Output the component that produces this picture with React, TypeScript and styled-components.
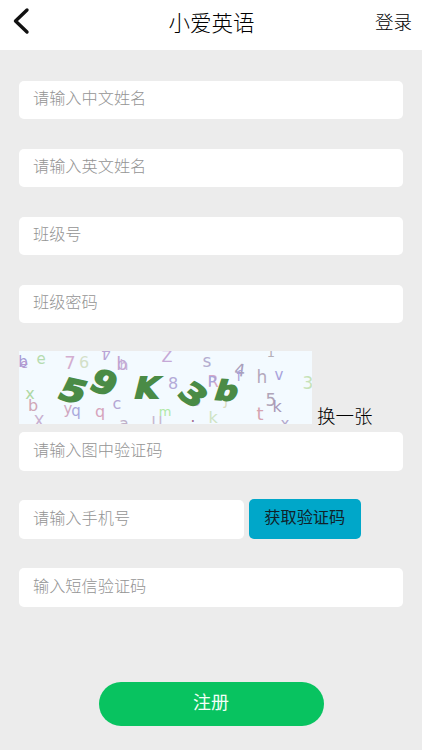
import React from 'react';
import styled, { createGlobalStyle } from 'styled-components';

const GlobalStyle = createGlobalStyle`
  html, body {
    margin: 0;
    padding: 0;
    background: #ececec;
  }
  * {
    box-sizing: border-box;
  }
`;

const Page = styled.div`
  width: 422px;
  height: 750px;
  overflow: hidden;
  display: flex;
  flex-direction: column;
  background: #ececec;
  font-family: "Noto Sans CJK SC", "Noto Sans", sans-serif;
  font-weight: 300;
`;

const Header = styled.header`
  height: 50px;
  flex: none;
  display: grid;
  grid-template-columns: 1fr auto 1fr;
  align-items: center;
  padding: 0 10px 0 11px;
  background: #fff;
`;

const BackButton = styled.button`
  width: 20px;
  height: 36px;
  padding: 0;
  margin-top: -9px;
  border: none;
  background: none;
  display: flex;
  align-items: center;
  justify-content: center;
`;

const Title = styled.h1`
  margin: -7px 0 0;
  font-size: 21.5px;
  font-weight: 300;
  color: #000;
`;

const LoginLink = styled.a`
  justify-self: end;
  margin-top: -9px;
  font-size: 18.5px;
  color: #000;
`;

const Form = styled.form`
  flex: 1;
  display: flex;
  flex-direction: column;
  padding: 30.5px 19px 24px;
`;

const Field = styled.input<{ $compact?: boolean }>`
  width: ${p => (p.$compact ? '225px' : '100%')};
  height: 38.5px;
  flex: none;
  padding: 0 15px 5px 14px;
  border: none;
  border-radius: 5px;
  outline: none;
  background: #fff;
  font-family: inherit;
  font-weight: 300;
  font-size: 16.2px;
  color: #333;

  &::placeholder {
    color: #949494;
    opacity: 1;
  }
`;

const Stack = styled.div`
  display: flex;
  flex-direction: column;
  gap: 29.5px;
`;

const CaptchaRow = styled.div`
  display: flex;
  align-items: flex-end;
  gap: 5px;
  margin: 28px 0 8px;
`;

const CaptchaImage = styled.svg`
  width: 293px;
  height: 73px;
  display: block;
  background: #f3faff;
`;

const CaptchaGlyph = styled.text<{ $strong?: boolean }>`
  font-family: "DejaVu Sans", sans-serif;
  font-weight: ${p => (p.$strong ? 700 : 400)};
  text-anchor: middle;
  dominant-baseline: central;
`;

const RefreshLink = styled.a`
  font-size: 18.5px;
  line-height: 20px;
  margin-bottom: -1px;
  color: #000;
`;

const PhoneRow = styled.div`
  display: flex;
  align-items: flex-end;
  gap: 4.5px;
  margin: 28px 0 29.5px;
`;

const CodeButton = styled.button`
  width: 112.5px;
  height: 40px;
  padding: 0 0 5px;
  border: none;
  border-radius: 5px;
  background: #00a7c9;
  font-family: inherit;
  font-size: 16.2px;
  color: #10222a;
`;

const Submit = styled.button`
  width: 225px;
  height: 44.5px;
  margin: 75px 0 0 79.5px;
  padding: 0 0 5px;
  border: none;
  border-radius: 22.5px;
  background: #08c360;
  font-family: inherit;
  font-size: 18px;
  color: #f2fff7;
`;

type Glyph = { c: string; x: number; y: number; s: number; f: string; r?: number; k?: number; w?: number; strong?: boolean };

const captchaGlyphs: Glyph[] = [
  { c: 'b', x: 4, y: 11, s: 15, f: '#a79ad6' },
  { c: 'e', x: 5, y: 12, s: 13, f: '#b59ad0' },
  { c: 'e', x: 22, y: 8, s: 15, f: '#b5dcb0' },
  { c: '7', x: 51, y: 11, s: 18, f: '#d3aed0' },
  { c: '6', x: 65, y: 11, s: 16, f: '#d3e0c8' },
  { c: '4', x: 87, y: 2, s: 15, f: '#b9a4d6', r: 180 },
  { c: 'b', x: 103, y: 12, s: 18, f: '#c0a4d0' },
  { c: 'h', x: 105, y: 14, s: 14, f: '#c8b0d8' },
  { c: 'Z', x: 148, y: 5, s: 16, f: '#c5a8d6' },
  { c: 's', x: 188, y: 10, s: 17, f: '#b4aed0' },
  { c: '1', x: 252, y: 1, s: 13, f: '#b5b0b8' },
  { c: '4', x: 221, y: 19, s: 17, f: '#a9a0bc', r: 8 },
  { c: 'f', x: 220, y: 25, s: 14, f: '#a9a2dc' },
  { c: 'R', x: 194, y: 30, s: 16, f: '#d6a6c6' },
  { c: 'P', x: 193, y: 30, s: 14, f: '#a8a6dc' },
  { c: 'h', x: 243, y: 26, s: 17, f: '#b4a8bc' },
  { c: 'v', x: 260, y: 24, s: 15, f: '#a8a2dc' },
  { c: '3', x: 289, y: 32, s: 17, f: '#c6e2b8' },
  { c: 'x', x: 11, y: 42, s: 16, f: '#aed8a4' },
  { c: 'b', x: 14, y: 54, s: 16, f: '#d0a6b6' },
  { c: 'y', x: 49, y: 58, s: 15, f: '#d0a6c0' },
  { c: 'q', x: 57, y: 60, s: 15, f: '#a8a8dc' },
  { c: 'q', x: 81, y: 60, s: 16, f: '#d6a4bc' },
  { c: 'c', x: 98, y: 52, s: 16, f: '#b4a6d4' },
  { c: '8', x: 154, y: 32, s: 16, f: '#b4aad8' },
  { c: 'm', x: 146, y: 60, s: 13, f: '#b0e8a6' },
  { c: 'k', x: 194, y: 66, s: 16, f: '#cfe4c4' },
  { c: 't', x: 241, y: 62, s: 18, f: '#d6a4b0' },
  { c: '5', x: 252, y: 49, s: 17, f: '#b0a4b8' },
  { c: 'k', x: 258, y: 55, s: 16, f: '#a898b8' },
  { c: 'X', x: 20, y: 70, s: 16, f: '#c8b0d0' },
  { c: 'a', x: 105, y: 72, s: 16, f: '#c0b0c8' },
  { c: 'U', x: 138, y: 72, s: 15, f: '#c8b8d0' },
  { c: '.', x: 174, y: 66, s: 15, f: '#a06a90' },
  { c: 'x', x: 266, y: 73, s: 15, f: '#b4a8cc' },
  { c: 'J', x: 207, y: 49, s: 14, f: '#dcdcc0' },
  { c: 'b', x: 177, y: 50, s: 15, f: '#dcb8d0' },
  { c: '5', x: 54, y: 40, s: 31, f: '#4a8b46', r: 12, k: -14, w: 1.2, strong: true },
  { c: '9', x: 85, y: 32, s: 32, f: '#4a8b46', r: 22, k: -6, w: 1.1, strong: true },
  { c: 'K', x: 128, y: 37, s: 29, f: '#4a8b46', k: -14, w: 1.05, strong: true },
  { c: '3', x: 174, y: 44, s: 30, f: '#4a8b46', r: 38, k: -8, w: 1.15, strong: true },
  { c: 'b', x: 208, y: 40, s: 27, f: '#4a8b46', r: 4, k: -14, w: 1.15, strong: true },
];

const Captcha: React.FC = () => (
  <CaptchaImage viewBox="0 0 293 73">
    {captchaGlyphs.map((g, i) => (
      <CaptchaGlyph
        key={i}
        $strong={g.strong}
        fontSize={g.s}
        fill={g.f}
        stroke={g.strong ? g.f : 'none'}
        strokeWidth={g.strong ? 1.8 : 0}
        transform={`translate(${g.x} ${g.y}) rotate(${g.r ?? 0}) skewX(${g.k ?? 0}) scale(${g.w ?? 1} 1)`}
      >
        {g.c}
      </CaptchaGlyph>
    ))}
  </CaptchaImage>
);

const App: React.FC = () => (
  <Page>
    <GlobalStyle />
    <Header>
      <BackButton type="button" aria-label="返回">
        <svg width="18" height="28" viewBox="0 0 18 28" fill="none">
          <path d="M15 3 3.5 14 15 25" stroke="#111" strokeWidth="3.4" strokeLinecap="round" strokeLinejoin="round" />
        </svg>
      </BackButton>
      <Title>小爱英语</Title>
      <LoginLink>登录</LoginLink>
    </Header>
    <Form>
      <Stack>
        <Field placeholder="请输入中文姓名" />
        <Field placeholder="请输入英文姓名" />
        <Field placeholder="班级号" />
        <Field placeholder="班级密码" />
      </Stack>
      <CaptchaRow>
        <Captcha />
        <RefreshLink>换一张</RefreshLink>
      </CaptchaRow>
      <Field placeholder="请输入图中验证码" />
      <PhoneRow>
        <Field $compact placeholder="请输入手机号" />
        <CodeButton type="button">获取验证码</CodeButton>
      </PhoneRow>
      <Field placeholder="输入短信验证码" />
      <Submit type="button">注册</Submit>
    </Form>
  </Page>
);

export default App;
